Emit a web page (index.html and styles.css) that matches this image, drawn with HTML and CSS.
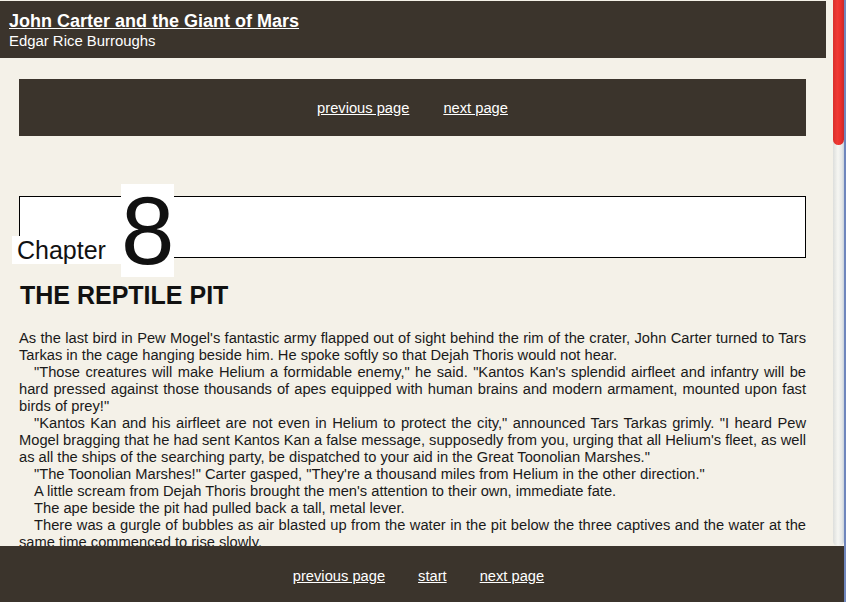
FILE: index.html
```html
<!DOCTYPE html>
<html lang="en">
<head>
<meta charset="utf-8">
<title>John Carter and the Giant of Mars - Chapter 8</title>
<link rel="stylesheet" href="styles.css">
</head>
<body>
<div class="frame">
  <div class="top-area">
    <div class="viewport">
      <header class="site-head">
        <a class="book-title" href="#">John Carter and the Giant of Mars</a>
        <div class="book-author">Edgar Rice Burroughs</div>
      </header>
      <nav class="pager pager-top">
        <a href="#">previous page</a>
        <a href="#">next page</a>
      </nav>
      <main class="chapter">
        <div class="chapter-box">
          <span class="chapter-word">Chapter</span><span class="chapter-num">8</span>
        </div>
        <h1 class="chapter-title">THE REPTILE PIT</h1>
        <div class="chapter-text">
          <p class="first">As the last bird in Pew Mogel's fantastic army flapped out of sight behind the rim of the crater, John Carter turned to Tars Tarkas in the cage hanging beside him. He spoke softly so that Dejah Thoris would not hear.</p>
          <p>"Those creatures will make Helium a formidable enemy," he said. "Kantos Kan's splendid airfleet and infantry will be hard pressed against those thousands of apes equipped with human brains and modern armament, mounted upon fast birds of prey!"</p>
          <p>"Kantos Kan and his airfleet are not even in Helium to protect the city," announced Tars Tarkas grimly. "I heard Pew Mogel bragging that he had sent Kantos Kan a false message, supposedly from you, urging that all Helium's fleet, as well as all the ships of the searching party, be dispatched to your aid in the Great Toonolian Marshes."</p>
          <p>"The Toonolian Marshes!" Carter gasped, "They're a thousand miles from Helium in the other direction."</p>
          <p>A little scream from Dejah Thoris brought the men's attention to their own, immediate fate.</p>
          <p>The ape beside the pit had pulled back a tall, metal lever.</p>
          <p>There was a gurgle of bubbles as air blasted up from the water in the pit below the three captives and the water at the same time commenced to rise slowly.</p>
        </div>
      </main>
    </div>
    <div class="scrollbar" aria-hidden="true">
      <div class="scrollbar-thumb"></div>
    </div>
  </div>
  <footer class="pager pager-bottom">
    <a href="#">previous page</a>
    <a href="#">start</a>
    <a href="#">next page</a>
  </footer>
</div>
</body>
</html>
```

FILE: styles.css
```css
html, body {
  margin: 0;
  padding: 0;
  height: 100%;
}
body {
  background: #f4f1e8;
  font-family: "Liberation Sans", Arial, sans-serif;
  color: #111;
  overflow: hidden;
}
.frame {
  height: 602px;
  display: flex;
  flex-direction: column;
  border-right: 2px solid #6f86bd;
}
.top-area {
  height: 546px;
  display: flex;
}
.viewport {
  flex: 1;
  min-width: 0;
  overflow: hidden;
}
.scrollbar {
  width: 11px;
  background: linear-gradient(to right, #dcdedc, #f6f6f2 45%, #e6e8e8 80%, #c9d2dc);
  border-radius: 0 0 5px 5px;
}
.scrollbar-thumb {
  height: 145px;
  background: linear-gradient(to right, #d8302c, #f03a34 40%, #ea2f2c 70%, #c9282a);
  border-radius: 0 0 6px 6px;
}
.site-head {
  background: #3b342c;
  margin: 1px 7px 0 0;
  padding: 10px 9px 6px;
  color: #fff;
}
.book-title {
  display: block;
  color: #fff;
  font-weight: bold;
  font-size: 18px;
  line-height: 20px;
}
.book-author {
  font-size: 14.9px;
  line-height: 21px;
}
.pager {
  background: #3b342c;
  display: flex;
  justify-content: center;
  align-items: center;
  gap: 34px;
}
.pager a {
  color: #fff;
  font-size: 14.7px;
}
.pager-top {
  margin: 21px 27px 0 19px;
  height: 57px;
}
.chapter {
  margin: 0 27px 0 19px;
  padding-top: 60px;
}
.chapter-box {
  background: #fff;
  border: 1px solid #000;
  height: 60px;
  display: flex;
  align-items: flex-end;
}
.chapter-word {
  background: #fff;
  font-size: 25px;
  line-height: 28px;
  margin: 0 0 -7px -8px;
  padding: 0 15px 0 5px;
}
.chapter-num {
  background: #fff;
  font-size: 96px;
  line-height: 93px;
  margin-bottom: -20px;
}
.chapter-title {
  font-size: 25px;
  line-height: 28px;
  margin: 23px 0 0 1px;
}
.chapter-text {
  margin-top: 21px;
  font-size: 14.7px;
  line-height: 17px;
  text-align: justify;
  color: #1a1a1a;
}
.chapter-text p {
  margin: 0;
  text-indent: 15px;
}
.chapter-text p.first {
  text-indent: 0;
}
.pager-bottom {
  flex: 1;
  gap: 33px;
  padding: 4px 7px 0 0;
}
```
